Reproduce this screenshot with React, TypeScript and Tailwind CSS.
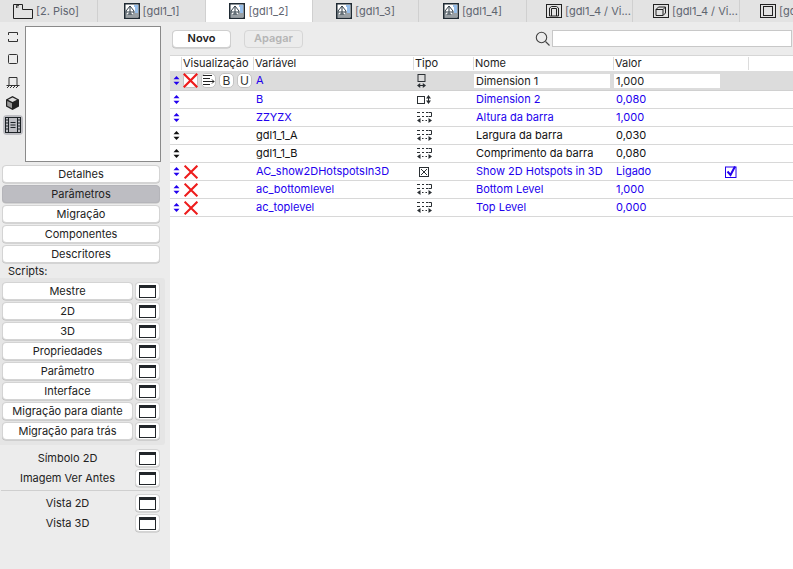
import React from 'react';

const FONT = "font-['Inter','Liberation_Sans',sans-serif]";

function PlanIcon() {
    return (
        <svg width="20" height="16" viewBox="0 0 20 16" fill="none" stroke="#222" strokeWidth="1" className="shrink-0">
            <path d="M0.5 15.5V1.5H9.5V6.5H19.5V15.5Z" />
            <path d="M3.5 5V2.5H6M3.5 4H5.5" strokeWidth="0.8" />
        </svg>
    );
}

function DetailIcon() {
    return (
        <svg width="16" height="16" viewBox="0 0 16 16" fill="none" className="shrink-0">
            <rect x="0.75" y="0.75" width="14.5" height="14.5" fill="#fff" stroke="#1f2a33" strokeWidth="1.5" />
            <path d="M2 14V8L6 3L10 8V14M2 9H10M6 3V14M4 14V11H8V14" stroke="#33404a" strokeWidth="1" />
            <path d="M10 3H14M11 5H14M11 7H14M11 9H14" stroke="#2f7fd6" strokeWidth="1" />
            <path d="M11 11H14M11 13H14" stroke="#33404a" strokeWidth="1" />
        </svg>
    );
}

function ViewIcon2D() {
    return (
        <svg width="16" height="14" viewBox="0 0 16 14" fill="none" stroke="#222" className="shrink-0">
            <rect x="0.5" y="0.5" width="15" height="13" />
            <path d="M3.5 12V4L5.5 2.5H10.5L12.5 4V12H3.5M5.5 12V4.5H10.5V12" />
        </svg>
    );
}

function ViewIcon3D() {
    return (
        <svg width="16" height="14" viewBox="0 0 16 14" fill="none" stroke="#222" className="shrink-0">
            <rect x="0.5" y="0.5" width="15" height="13" />
            <path d="M3 5.5H10V11.5H3ZM3 5.5L5.5 3H12.5V9L10 11.5M10 5.5L12.5 3" />
        </svg>
    );
}

function ViewIconPlain() {
    return (
        <svg width="16" height="14" viewBox="0 0 16 14" fill="none" stroke="#222" className="shrink-0">
            <rect x="0.5" y="0.5" width="15" height="13" />
            <rect x="3.5" y="2.5" width="9" height="9" />
        </svg>
    );
}

function Tab({ label, icon, active, className }: { label: string; icon: React.ReactNode; active?: boolean; className: string }) {
    return (
        <div className={`${className} h-full shrink-0 flex items-center gap-[3px] border-r border-[#d0d0d0] text-[11px] text-[#5f6570] overflow-hidden ${active ? 'bg-white' : ''}`}>
            {icon}
            <span className="whitespace-nowrap">{label}</span>
        </div>
    );
}

function SideButton({ label, active, className }: { label: string; active?: boolean; className?: string }) {
    return (
        <div className={`h-[18px] flex items-center justify-center rounded-[4px] border text-[11px] text-[#222] shadow-[0_0.5px_0.5px_rgba(0,0,0,0.2)] ${active ? 'bg-[#bdbdc2] border-[#b5b5ba]' : 'bg-white border-[#d4d4d4]'} ${className ?? ''}`}>
            {label}
        </div>
    );
}

function WindowButton() {
    return (
        <div className="w-[25px] h-[18px] shrink-0 flex items-center justify-center rounded-[4px] bg-white border border-[#d4d4d4] shadow-[0_0.5px_0.5px_rgba(0,0,0,0.2)]">
            <div className="w-[17px] h-[13px] border border-[#22262a] border-t-[3px]" />
        </div>
    );
}

function ScriptRow({ label }: { label: string }) {
    return (
        <div className="flex gap-[2px] h-[20px]">
            <SideButton label={label} className="flex-1" />
            <WindowButton />
        </div>
    );
}

function PlainRow({ label }: { label: string }) {
    return (
        <div className="flex gap-[2px] h-[20px] pl-[2px] pr-[10px]">
            <div className="flex-1 h-[18px] flex items-center justify-center text-[11px] text-[#222]">{label}</div>
            <WindowButton />
        </div>
    );
}

function MoveArrows({ color }: { color: string }) {
    return (
        <svg width="7" height="9" viewBox="0 0 7 9" fill={color}>
            <path d="M3.5 0L6.5 3.2H0.5Z" />
            <path d="M3.5 9L0.5 5.8H6.5Z" />
        </svg>
    );
}

function RedX({ size = 15 }: { size?: number }) {
    return (
        <svg width={size} height={size} viewBox="0 0 15 15" stroke="#ee1c1c" strokeWidth="2.2" strokeLinecap="square" className="shrink-0">
            <path d="M1.5 1.5L13.5 13.5M13.5 1.5L1.5 13.5" />
        </svg>
    );
}

function LengthIcon() {
    return (
        <svg width="15" height="13" viewBox="0 0 15 13" fill="none">
            <path d="M0 1.5H3M5 1.5H7M9 1.5H11M0 5.5H3M5 5.5H7M9 5.5H11M11.5 1.5H14.5V5.5H11.5" stroke="#2a2f33" />
            <path d="M5 9.5H6.5M8.5 9.5H10" stroke="#2a2f33" />
            <path d="M3.5 7L0 9.5L3.5 12ZM11.5 7L15 9.5L11.5 12Z" fill="#2a2f33" />
        </svg>
    );
}

function WidthIcon() {
    return (
        <svg width="9" height="14" viewBox="0 0 9 14" fill="none">
            <rect x="1" y="0.5" width="7" height="7" stroke="#2a2f33" />
            <path d="M1 11.5H8" stroke="#2a2f33" />
            <path d="M3.2 9L0 11.5L3.2 14ZM5.8 9L9 11.5L5.8 14Z" fill="#2a2f33" />
        </svg>
    );
}

function HeightIcon() {
    return (
        <svg width="14" height="9" viewBox="0 0 14 9" fill="none">
            <rect x="0.5" y="1.5" width="7" height="7" stroke="#2a2f33" />
            <path d="M11.5 2V7" stroke="#2a2f33" />
            <path d="M11.5 0L14 3.5H9ZM11.5 9L9 5.5H14Z" fill="#2a2f33" />
        </svg>
    );
}

function BoolIcon() {
    return (
        <svg width="10" height="10" viewBox="0 0 10 10" fill="none" stroke="#2a2f33" className="ml-[2px]">
            <rect x="0.5" y="0.5" width="9" height="9" />
            <path d="M2 2L8 8M8 2L2 8" />
        </svg>
    );
}

function RoundButton({ children }: { children: React.ReactNode }) {
    return (
        <div className="w-[15px] h-[15px] shrink-0 flex items-center justify-center rounded-[5px] bg-white border border-[#c4c4c4] text-[12px] text-[#333]">
            {children}
        </div>
    );
}

interface Param {
    variable: string;
    type: React.ReactNode;
    name: string;
    value: string;
    blue: boolean;
    hidden?: boolean;
    checked?: boolean;
}

const params: Param[] = [
    { variable: 'B', type: <HeightIcon />, name: 'Dimension 2', value: '0,080', blue: true },
    { variable: 'ZZYZX', type: <LengthIcon />, name: 'Altura da barra', value: '1,000', blue: true },
    { variable: 'gdl1_1_A', type: <LengthIcon />, name: 'Largura da barra', value: '0,030', blue: false },
    { variable: 'gdl1_1_B', type: <LengthIcon />, name: 'Comprimento da barra', value: '0,080', blue: false },
    { variable: 'AC_show2DHotspotsIn3D', type: <BoolIcon />, name: 'Show 2D Hotspots in 3D', value: 'Ligado', blue: true, hidden: true, checked: true },
    { variable: 'ac_bottomlevel', type: <LengthIcon />, name: 'Bottom Level', value: '1,000', blue: true, hidden: true },
    { variable: 'ac_toplevel', type: <LengthIcon />, name: 'Top Level', value: '0,000', blue: true, hidden: true },
];

const GRID = 'grid grid-cols-[13px_72px_160px_59px_140px_134px_1fr]';
const HEADER_GRID = 'grid grid-cols-[11px_72px_160px_60px_140px_135px_1fr]';

export default function App() {
    return (
        <div className={`${FONT} w-[793px] h-[569px] overflow-hidden flex flex-col bg-[#ececec]`}>
            <div className="h-[22px] shrink-0 flex bg-[#e3e3e3] overflow-hidden">
                <Tab className="w-[98px] pl-[13px]" label="[2. Piso]" icon={<PlanIcon />} />
                <Tab className="w-[108px] justify-center" label="[gdl1_1]" icon={<DetailIcon />} />
                <Tab className="w-[107px] justify-center" label="[gdl1_2]" icon={<DetailIcon />} active />
                <Tab className="w-[106px] justify-center" label="[gdl1_3]" icon={<DetailIcon />} />
                <Tab className="w-[108px] justify-center" label="[gdl1_4]" icon={<DetailIcon />} />
                <Tab className="w-[106px] pl-[19px]" label="[gdl1_4 / Vi..." icon={<ViewIcon2D />} />
                <Tab className="w-[107px] pl-[20px]" label="[gdl1_4 / Vi..." icon={<ViewIcon3D />} />
                <Tab className="w-[53px] pl-[20px] border-r-0" label="[gdl1_4 / Vi..." icon={<ViewIconPlain />} />
            </div>

            <div className="flex-1 flex min-h-0">
                <aside className="w-[170px] shrink-0 flex flex-col">
                    <div className="flex h-[142px]">
                        <div className="w-[25px] flex flex-col items-center pt-[10px]">
                            <svg width="10" height="10" viewBox="0 0 10 10" fill="none" stroke="#333">
                                <path d="M0.5 3V0.5H9.5V3M0.5 7V9.5H9.5V7" />
                            </svg>
                            <svg width="10" height="10" viewBox="0 0 10 10" fill="none" stroke="#333" className="mt-[12px]">
                                <rect x="0.5" y="0.5" width="9" height="9" rx="1" />
                            </svg>
                            <svg width="14" height="13" viewBox="0 0 14 13" fill="none" stroke="#333" className="mt-[12px]">
                                <path d="M3 9V1.5H11V9M0.5 9.5H13.5M1 12L3 10M4 12L6 10M7 12L9 10M10 12L12 10" />
                            </svg>
                            <svg width="13" height="14" viewBox="0 0 13 14" className="mt-[7px]">
                                <path d="M6.5 0L13 3.5V10.5L6.5 14L0 10.5V3.5Z" fill="#222" />
                                <path d="M6.5 1.5L11 3.8L6.5 6L2 3.8Z" fill="#ddd" />
                                <path d="M1.2 5L6 7.2V12.2L1.2 9.8Z" fill="#999" />
                            </svg>
                            <div className="mt-[5px] w-[20px] h-[20px] flex items-center justify-center rounded-[4px] bg-[#bdbdc2]">
                                <svg width="16" height="16" viewBox="0 0 16 16" fill="none" stroke="#1d2226">
                                    <rect x="0.5" y="0.5" width="15" height="15" />
                                    <path d="M3.5 0.5V15.5M12.5 0.5V15.5M5.5 5.5H10.5M5.5 8H10.5M5.5 10.5H10.5M0.5 3H3.5M0.5 6H3.5M0.5 9H3.5M0.5 12H3.5M12.5 3H15.5M12.5 6H15.5M12.5 9H15.5M12.5 12H15.5" />
                                </svg>
                            </div>
                        </div>
                        <div className="w-[136px] h-[136px] mt-[4px] bg-white border border-[#8a8a8a]" />
                    </div>

                    <div className="pl-[2px] pr-[10px] mt-[1px] flex flex-col gap-[2px]">
                        <SideButton label="Detalhes" />
                        <SideButton label="Parâmetros" active />
                        <SideButton label="Migração" />
                        <SideButton label="Componentes" />
                        <SideButton label="Descritores" />
                    </div>
                    <div className="h-[15px] pl-[8px] text-[11px] text-[#222] leading-[17px]">Scripts:</div>
                    <div className="bg-[#e5e5e5] h-[167px] pt-[4px] pl-[2px] pr-[5px] mr-[5px] rounded-r-[3px]">
                        <ScriptRow label="Mestre" />
                        <ScriptRow label="2D" />
                        <ScriptRow label="3D" />
                        <ScriptRow label="Propriedades" />
                        <ScriptRow label="Parâmetro" />
                        <ScriptRow label="Interface" />
                        <ScriptRow label="Migração para diante" />
                        <ScriptRow label="Migração para trás" />
                    </div>
                    <div className="mt-[4px]">
                        <PlainRow label="Símbolo 2D" />
                        <PlainRow label="Imagem Ver Antes" />
                    </div>
                    <div className="h-px bg-[#cfcfcf] ml-[1px] mr-[10px] mt-[1px] mb-[3px]" />
                    <PlainRow label="Vista 2D" />
                    <PlainRow label="Vista 3D" />
                </aside>

                <main className="flex-1 min-w-0 flex flex-col bg-white">
                    <div className="h-[34px] shrink-0 bg-[#ececec] flex items-center pl-[2px] pr-[1px] border-b border-[#d6d6d6]">
                        <div className="w-[59px] h-[18px] flex items-center justify-center rounded-[4px] bg-white border border-[#cfcfcf] text-[11px] font-semibold text-[#222] shadow-[0_0.5px_0.5px_rgba(0,0,0,0.2)]">
                            Novo
                        </div>
                        <div className="ml-[13px] w-[59px] h-[18px] flex items-center justify-center rounded-[4px] bg-[#ececec] border border-[#d6d6d6] text-[11px] font-semibold text-[#b5b5b5]">
                            Apagar
                        </div>
                        <svg width="16" height="16" viewBox="0 0 16 16" fill="none" stroke="#444" strokeWidth="1.1" className="ml-[232px]">
                            <circle cx="6.5" cy="6.5" r="5.2" />
                            <path d="M10.5 10.5L14.5 14.5" />
                        </svg>
                        <div className="ml-[1px] flex-1 h-[17px] bg-white border border-[#c8c8c8]" />
                    </div>

                    <div className={`${HEADER_GRID} h-[15px] shrink-0 items-center text-[11px] text-[#222]`}>
                        <div />
                        <div className="border-l border-[#dcdcdc] pl-[1px] leading-[13px]">Visualização</div>
                        <div className="border-l border-[#dcdcdc] pl-[1px] leading-[13px]">Variável</div>
                        <div className="border-l border-[#dcdcdc] pl-[1px] leading-[13px]">Tipo</div>
                        <div className="border-l border-[#dcdcdc] pl-[1px] leading-[13px]">Nome</div>
                        <div className="border-l border-[#dcdcdc] pl-[1px] leading-[13px]">Valor</div>
                        <div className="border-l border-[#dcdcdc] leading-[13px]">&nbsp;</div>
                    </div>

                    <div className={`${GRID} h-[20px] shrink-0 items-center bg-[#dcdcdc] border-b border-[#d0d0d0] text-[11px]`}>
                        <div className="flex justify-center"><MoveArrows color="#2200ee" /></div>
                        <div className="flex items-center gap-[3px]">
                            <div className="w-[15px] h-[15px] shrink-0 flex items-center justify-center rounded-[4px] bg-white border border-[#c4c4c4]"><RedX /></div>
                            <RoundButton>
                                <svg width="13" height="11" viewBox="0 0 13 11" fill="none" stroke="#222" strokeWidth="1" className="shrink-0">
                                    <path d="M1 0.5H10M1 3.5H8M1 6.5H12M10 4.5L12 6.5L10 8.5M1 9.5H8" />
                                </svg>
                            </RoundButton>
                            <RoundButton>B</RoundButton>
                            <RoundButton>U</RoundButton>
                        </div>
                        <div className="pl-[1px] text-[#2200ee]">A</div>
                        <div className="pl-[2px] flex"><WidthIcon /></div>
                        <div className="pr-[4px]"><div className="h-[14px] bg-white pl-[2px] leading-[14px] text-[#222]">Dimension 1</div></div>
                        <div className="pr-[28px]"><div className="h-[14px] bg-white pl-[2px] leading-[14px] text-[#222]">1,000</div></div>
                        <div />
                    </div>

                    {params.map((param) => {
                        const color = param.blue ? 'text-[#2200ee]' : 'text-[#111]';
                        return (
                            <div key={param.variable} className={`${GRID} h-[18px] shrink-0 items-center border-b border-[#d8d8d8] text-[11px] ${color}`}>
                                <div className="flex justify-center"><MoveArrows color={param.blue ? '#2200ee' : '#111'} /></div>
                                <div className="pl-[1px] flex items-center">{param.hidden && <RedX size={14} />}</div>
                                <div className="pl-[1px] whitespace-nowrap">{param.variable}</div>
                                <div className="pl-[2px] flex">{param.type}</div>
                                <div className="pl-[2px] whitespace-nowrap">{param.name}</div>
                                <div className="pl-[2px] flex items-center">
                                    <span className="w-[109px]">{param.value}</span>
                                    {param.checked && (
                                        <svg width="12" height="12" viewBox="0 0 12 12" fill="none" stroke="#2200ee" className="shrink-0">
                                            <rect x="0.5" y="1" width="10.5" height="10.5" />
                                            <path d="M2.5 5.5L5.5 9L10 0.5" strokeWidth="2" />
                                        </svg>
                                    )}
                                </div>
                                <div />
                            </div>
                        );
                    })}
                </main>
            </div>
        </div>
    );
}
